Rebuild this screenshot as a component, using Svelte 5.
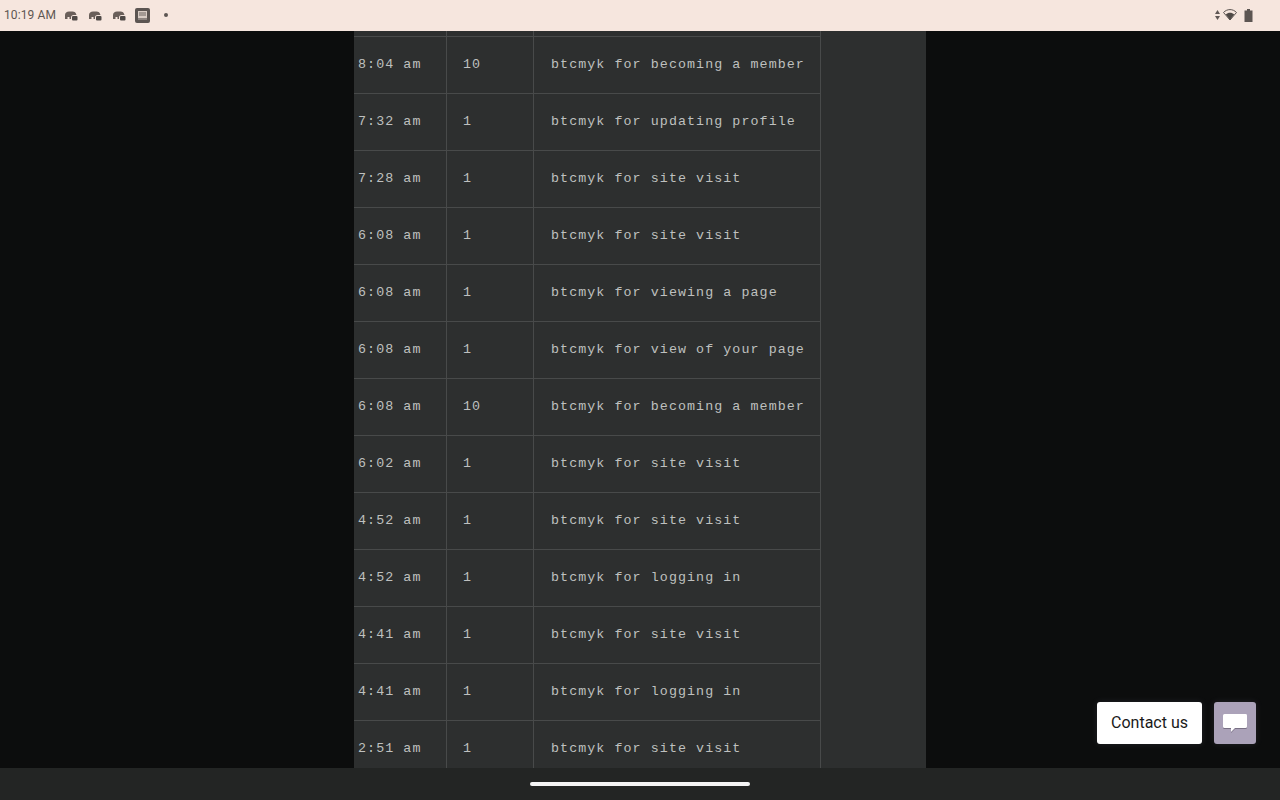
<script>
  const rows = [
    ['8:04 am', '10', 'btcmyk for becoming a member'],
    ['7:32 am', '1', 'btcmyk for updating profile'],
    ['7:28 am', '1', 'btcmyk for site visit'],
    ['6:08 am', '1', 'btcmyk for site visit'],
    ['6:08 am', '1', 'btcmyk for viewing a page'],
    ['6:08 am', '1', 'btcmyk for view of your page'],
    ['6:08 am', '10', 'btcmyk for becoming a member'],
    ['6:02 am', '1', 'btcmyk for site visit'],
    ['4:52 am', '1', 'btcmyk for site visit'],
    ['4:52 am', '1', 'btcmyk for logging in'],
    ['4:41 am', '1', 'btcmyk for site visit'],
    ['4:41 am', '1', 'btcmyk for logging in'],
    ['2:51 am', '1', 'btcmyk for site visit']
  ];
</script>

<div class="screen">
  <header class="status">
    <div class="left">
      <span class="clock">10:19 AM</span>
      {#each [0, 1, 2] as i (i)}
        <svg class="note" width="14" height="12" viewBox="0 0 14 12">
          <path d="M1 9V5C1 2.800 2.800 1.500 5 1.500h3.500c2 0 3.500 1 4 3.500H9.500C8 5 7 6 7 7.500V9H5.500V7h-2v2z" fill="#6a5f5a" />
          <rect x="8" y="6" width="5.500" height="4.500" rx="1" fill="#4f4946" />
        </svg>
      {/each}
      <svg class="msg" width="15" height="15" viewBox="0 0 15 15">
        <rect width="15" height="15" rx="2" fill="#5c5552" />
        <rect x="3" y="3" width="9" height="7" fill="#d8ccc5" />
        <path d="M4 5h7M4 7h7" stroke="#6f6763" stroke-width="1" />
        <path d="M3 10h9v2H3z" fill="#8d8480" />
      </svg>
      <span class="dot"></span>
    </div>
    <div class="right">
      <svg width="7" height="12" viewBox="0 0 7 12">
        <path d="M3.500 1 6 5H1zM3.500 11 1 7h5z" fill="#5f5754" />
      </svg>
      <svg width="14" height="12" viewBox="0 0 14 12">
        <path d="M0.500 3.500C2.500 1.500 4.500 .6 7 .6s4.500.9 6.500 2.900L7 11z" fill="none" stroke="#5a5350" stroke-width="1" />
        <path d="M2.800 5.400C4 4.300 5.400 3.800 7 3.800s3 .5 4.200 1.600L7 11z" fill="#4f4946" />
      </svg>
      <svg width="9" height="13" viewBox="0 0 9 13">
        <path d="M3 0h3v1.500h2.500V13H.5V1.500H3z" fill="#5c5552" />
      </svg>
    </div>
  </header>

  <main class="stage">
    <section class="page">
      <div class="cut"><span></span><span></span><span></span></div>
      <table>
        <tbody>
          {#each rows as row}
            <tr>
              <td class="time">{row[0]}</td>
              <td class="pts">{row[1]}</td>
              <td class="why">{row[2]}</td>
            </tr>
          {/each}
        </tbody>
      </table>
    </section>

    <div class="contact">
      <span class="label">Contact us</span>
      <span class="bubble">
        <svg width="26" height="22" viewBox="0 0 26 22">
          <path d="M2.500 1h21A1.500 1.500 0 0 1 25 2.500v11a1.500 1.500 0 0 1-1.500 1.500H13l-4 4v-4H2.500A1.500 1.500 0 0 1 1 13.500v-11A1.500 1.500 0 0 1 2.500 1z" fill="#fff" />
        </svg>
      </span>
    </div>
  </main>

  <footer class="nav"><span class="pill"></span></footer>
</div>

<style>
  :global(body) {
    background: #0c0d0d;
  }

  .screen {
    width: 1280px;
    height: 800px;
    display: flex;
    flex-direction: column;
    overflow: hidden;
    background: #0c0d0d;
  }

  .status {
    flex: 0 0 31px;
    box-sizing: border-box;
    padding: 0 27px 1px 4px;
    display: flex;
    align-items: center;
    justify-content: space-between;
    background: #f6e6de;
    color: #5e5652;
    font: 12px Roboto, sans-serif;
  }

  .left {
    display: flex;
    align-items: center;
  }

  .clock {
    margin-right: 3px;
    letter-spacing: 0.1px;
  }

  .note {
    margin: 1px 5px 0 5px;
  }

  .msg {
    margin-left: 4px;
  }

  .dot {
    width: 4px;
    height: 4px;
    margin-left: 14px;
    border-radius: 50%;
    background: #5c5552;
  }

  .right {
    display: flex;
    align-items: center;
    gap: 2px;
  }

  .right svg:last-child {
    margin-left: 5px;
  }

  .stage {
    flex: 1;
    position: relative;
    display: flex;
    min-height: 0;
  }

  .page {
    width: 572px;
    margin-left: 354px;
    background: #2d2f2f;
    overflow: hidden;
  }

  .cut {
    width: 467px;
    height: 5px;
    display: flex;
  }

  .cut span {
    box-sizing: border-box;
    border-right: 1px solid #484a4a;
  }

  .cut span:nth-child(1) {
    width: 93px;
  }

  .cut span:nth-child(2) {
    width: 87px;
  }

  .cut span:nth-child(3) {
    width: 287px;
  }

  table {
    width: 467px;
    table-layout: fixed;
    border-collapse: separate;
    border-spacing: 0;
    font: 13.33px "Liberation Mono", monospace;
    letter-spacing: 1.07px;
    color: #bfc0bf;
  }

  td {
    box-sizing: border-box;
    height: 57px;
    padding: 0 0 2px;
    border-top: 1px solid #484a4a;
    border-right: 1px solid #484a4a;
    white-space: nowrap;
    overflow: hidden;
  }

  .time {
    width: 93px;
    padding-left: 4px;
  }

  .pts {
    width: 87px;
    padding-left: 16px;
  }

  .why {
    width: 287px;
    padding-left: 17px;
  }

  .contact {
    position: absolute;
    right: 24px;
    bottom: 24px;
    display: flex;
    align-items: center;
    gap: 12px;
  }

  .label {
    height: 42px;
    box-sizing: border-box;
    padding: 0 14px 2px;
    display: flex;
    align-items: center;
    border-radius: 3px;
    background: #fff;
    color: #1a1a1a;
    font: 16px Roboto, sans-serif;
    box-shadow: 0 0 7px rgba(190, 190, 220, 0.12);
  }

  .bubble {
    width: 42px;
    height: 42px;
    display: flex;
    align-items: center;
    justify-content: center;
    border-radius: 3px;
    background: #aba2b9;
    box-shadow: 0 0 7px rgba(190, 190, 220, 0.12);
  }

  .bubble svg {
    margin-top: 2px;
    filter: drop-shadow(0 1px 0.5px rgba(60, 50, 70, 0.45));
  }

  .nav {
    flex: 0 0 32px;
    display: flex;
    align-items: center;
    justify-content: center;
    background: #232524;
  }

  .pill {
    width: 220px;
    height: 4px;
    border-radius: 2px;
    background: #f4f4f4;
  }
</style>
